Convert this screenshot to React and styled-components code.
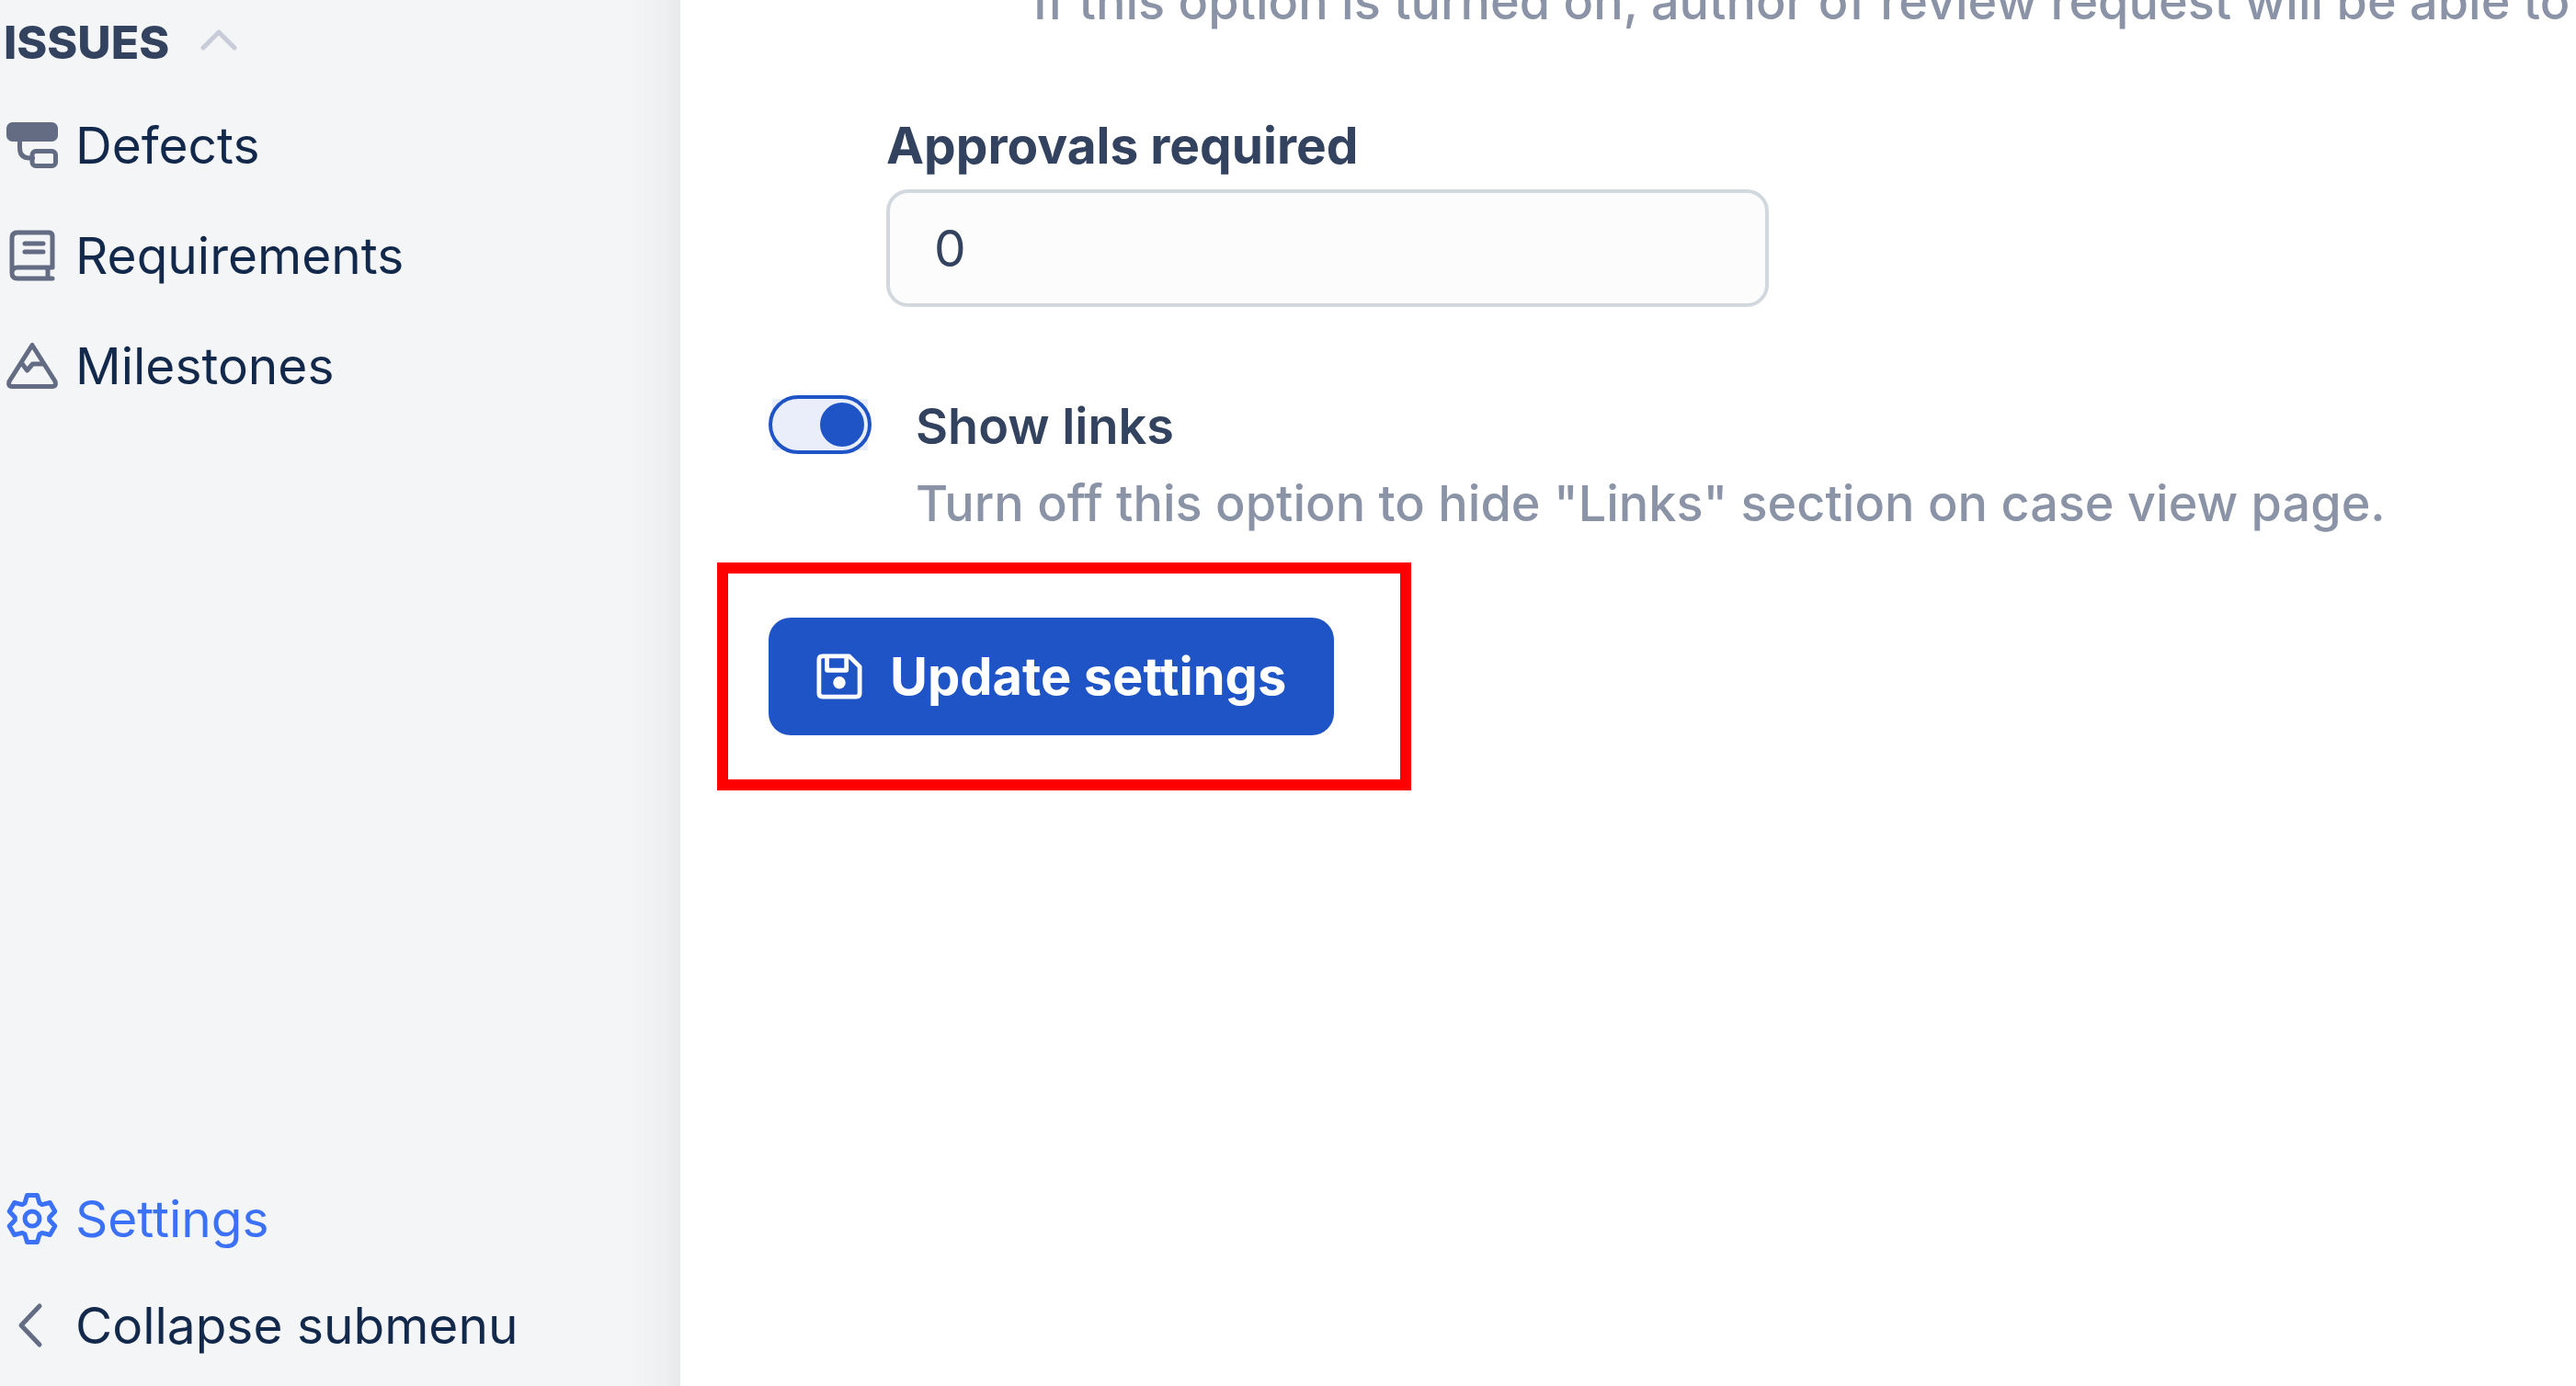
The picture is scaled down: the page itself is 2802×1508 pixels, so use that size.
import React, { useState } from "react";
import styled, { createGlobalStyle } from "styled-components";

const GlobalStyle = createGlobalStyle`
  *, *::before, *::after { box-sizing: border-box; }
  body { margin: 0; background: #fff; font-family: Inter, "Liberation Sans", sans-serif; }
  button, input { font: inherit; }
`;

const Layout = styled.div`
  display: flex;
  height: 100vh;
  overflow: hidden;
  background: #fff;
`;

const Sidebar = styled.nav`
  display: flex;
  flex-direction: column;
  flex: 0 0 740px;
  background: linear-gradient(to left, #e8e9eb 0, #eeeff1 16px, #f4f5f7 56px);
`;

const SectionToggle = styled.button`
  display: flex;
  align-items: center;
  gap: 32px;
  height: 92px;
  padding: 0 4px;
  border: 0;
  background: none;
  color: #33435f;
  font-size: 50px;
  font-weight: 800;
  line-height: 56px;
`;

const NavList = styled.ul`
  display: flex;
  flex-direction: column;
  margin: ${(p) => (p.$bottom ? "auto 0 8px" : "6px 0 0")};
  padding: 0;
  list-style: none;
`;

const NavItem = styled.a`
  display: flex;
  align-items: center;
  gap: 18px;
  height: ${(p) => (p.$compact ? 116 : 120)}px;
  padding: 0 6px;
  color: ${(p) => (p.$active ? "#3b71f7" : "#13294b")};
  font-size: 55px;
  line-height: 80px;
  text-decoration: none;
`;

const Icon = styled.svg`
  flex: none;
  width: ${(p) => p.$size || 58}px;
  height: ${(p) => p.$size || 58}px;
  color: ${(p) => p.$color || "#636c82"};
  fill: none;
  stroke: currentColor;
  stroke-width: 5;
  stroke-linecap: round;
  stroke-linejoin: round;
`;

const Content = styled.main`
  display: flex;
  flex-direction: column;
  align-items: flex-start;
  flex: 1;
  min-width: 0;
  padding-left: 40px;
`;

const Hint = styled.p`
  margin: 0;
  color: #8b93a7;
  font-size: 54px;
  font-weight: 500;
  line-height: 84px;
  white-space: nowrap;
`;

const ReviewHint = styled(Hint)`
  margin: -40px 0 0 344px;
`;

const Field = styled.div`
  display: flex;
  flex-direction: column;
  gap: 6px;
  width: 960px;
  margin: 72px 0 0 184px;
`;

const FieldLabel = styled.label`
  color: #33435f;
  font-size: 55px;
  font-weight: 700;
  line-height: 84px;
`;

const NumberInput = styled.input`
  height: 128px;
  padding: 0 48px;
  border: 4px solid #d1d8de;
  border-radius: 24px;
  background: #fcfcfc;
  color: #33435f;
  font-size: 55px;
`;

const SwitchRow = styled.div`
  display: flex;
  align-items: flex-start;
  gap: 48px;
  margin: 88px 0 0 56px;
`;

const SwitchFrame = styled.span`
  display: flex;
  flex: none;
  margin-top: 8px;
  background: linear-gradient(#e9eefa, #e9eefa) center / 104px 56px no-repeat;
`;

const Switch = styled.input`
  appearance: none;
  display: flex;
  justify-content: flex-start;
  align-items: center;
  width: 112px;
  height: 64px;
  margin: 0;
  padding: 0 4px;
  border: 4px solid #1f54c7;
  border-radius: 32px;
  background: #e9eefa;

  &::before {
    content: "";
    width: 48px;
    height: 48px;
    border-radius: 50%;
    background: #1f54c7;
  }

  &:checked {
    justify-content: flex-end;
  }
`;

const SwitchText = styled.div`
  display: flex;
  flex-direction: column;
`;

const SwitchLabel = styled.label`
  color: #33435f;
  font-size: 54px;
  font-weight: 600;
  line-height: 84px;
`;

const Highlight = styled.div`
  padding: 48px 72px 48px 44px;
  margin-top: 22px;
  border: 12px solid #ff0000;
`;

const SubmitButton = styled.button`
  display: flex;
  align-items: center;
  gap: 30px;
  height: 128px;
  padding: 0 52px;
  border: 0;
  border-radius: 24px;
  background: #1f54c7;
  color: #fff;
  font-size: 56px;
  font-weight: 700;
  white-space: nowrap;
`;

const DefectsIcon = () => (
  <Icon viewBox="0 0 58 58" aria-hidden="true">
    <rect x="3.5" y="6.5" width="51" height="16" rx="4" fill="currentColor" />
    <path d="M15.500 22v10q0 11 11 11h3" />
    <rect x="29" y="35.500" width="25.500" height="16" rx="4" />
  </Icon>
);

const RequirementsIcon = () => (
  <Icon viewBox="0 0 58 58" aria-hidden="true">
    <path d="M51 54H13q-6 0-6-6V10q0-6 6-6h34q4 0 4 4v34H13q-6 0-6 6M46 43v10M21 16h20M21 25h20" />
  </Icon>
);

const MilestonesIcon = () => (
  <Icon viewBox="0 0 58 58" aria-hidden="true">
    <path d="M29 6.500 4 46Q2.500 51.500 7 51.500H51Q55.500 51.500 54 46Z" />
    <path d="M17.500 26l6 8 6-7h12" />
  </Icon>
);

// One tooth of the gear, repeated every 60 degrees around the centre.
const toothCorners = [[-8, -17], [-5.5, -25.5], [5.5, -25.5], [8, -17]];
const gearOutline = [0, 60, 120, 180, 240, 300]
  .flatMap((deg) => {
    const a = (deg * Math.PI) / 180;
    return toothCorners.map(([x, y]) => {
      const px = 29 + x * Math.cos(a) - y * Math.sin(a);
      const py = 29 + x * Math.sin(a) + y * Math.cos(a);
      return `${px.toFixed(2)},${py.toFixed(2)}`;
    });
  })
  .join(" ");

const GearIcon = () => (
  <Icon viewBox="0 0 58 58" $color="#3b71f7" aria-hidden="true">
    <polygon points={gearOutline} />
    <circle cx="29" cy="29" r="8" />
  </Icon>
);

const BackIcon = () => (
  <Icon viewBox="0 0 58 58" aria-hidden="true">
    <path d="M37 8 17 29l20 21" />
  </Icon>
);

const ChevronUpIcon = () => (
  <Icon viewBox="0 0 44 44" $size={44} $color="#c8cbd8" aria-hidden="true">
    <path d="M5 28 22 11l17 17" />
  </Icon>
);

const SaveIcon = () => (
  <Icon viewBox="0 0 52 52" $size={50} $color="#fff" aria-hidden="true">
    <path d="M7 3h30l12 12v30q0 4-4 4H7q-4 0-4-4V7q0-4 4-4zM12 4v15h22V4" />
    <circle cx="26" cy="33" r="4.500" fill="currentColor" />
  </Icon>
);

const issueLinks = [
  { label: "Defects", icon: <DefectsIcon /> },
  { label: "Requirements", icon: <RequirementsIcon /> },
  { label: "Milestones", icon: <MilestonesIcon /> },
];

export default function App() {
  const [approvals, setApprovals] = useState("0");
  const [showLinks, setShowLinks] = useState(true);

  return (
    <>
      <GlobalStyle />
      <Layout>
        <Sidebar>
          <SectionToggle type="button" aria-expanded="true">
            ISSUES
            <ChevronUpIcon />
          </SectionToggle>
          <NavList>
            {issueLinks.map((link) => (
              <li key={link.label}>
                <NavItem href="#">
                  {link.icon}
                  {link.label}
                </NavItem>
              </li>
            ))}
          </NavList>
          <NavList $bottom>
            <li>
              <NavItem href="#" $compact $active>
                <GearIcon />
                Settings
              </NavItem>
            </li>
            <li>
              <NavItem href="#" $compact>
                <BackIcon />
                Collapse submenu
              </NavItem>
            </li>
          </NavList>
        </Sidebar>
        <Content>
          <ReviewHint>
            If this option is turned on, author of review request will be able to
          </ReviewHint>
          <Field>
            <FieldLabel htmlFor="approvals">Approvals required</FieldLabel>
            <NumberInput
              id="approvals"
              inputMode="numeric"
              value={approvals}
              onChange={(e) => setApprovals(e.target.value)}
            />
          </Field>
          <SwitchRow>
            <SwitchFrame>
              <Switch
                id="show-links"
                type="checkbox"
                role="switch"
                checked={showLinks}
                onChange={(e) => setShowLinks(e.target.checked)}
              />
            </SwitchFrame>
            <SwitchText>
              <SwitchLabel htmlFor="show-links">Show links</SwitchLabel>
              <Hint>Turn off this option to hide "Links" section on case view page.</Hint>
            </SwitchText>
          </SwitchRow>
          <Highlight>
            <SubmitButton type="button">
              <SaveIcon />
              Update settings
            </SubmitButton>
          </Highlight>
        </Content>
      </Layout>
    </>
  );
}
